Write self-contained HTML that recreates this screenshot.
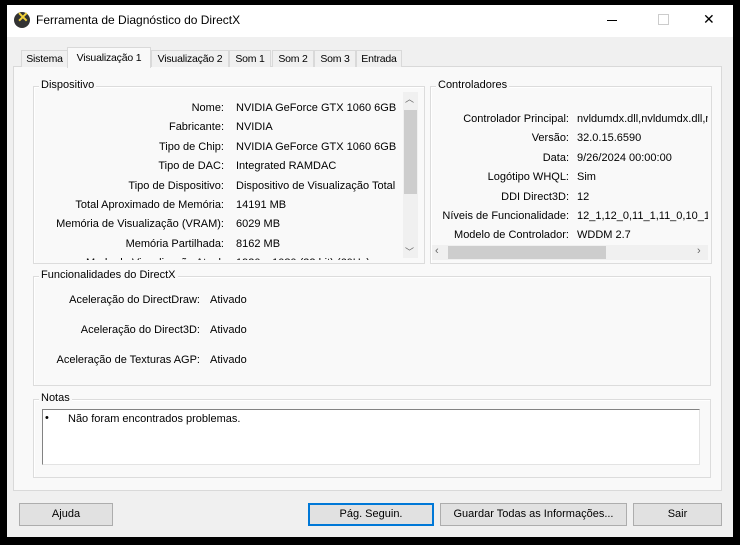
<!DOCTYPE html><html><head><style>
body{margin:0;width:740px;height:545px;background:#000;position:relative;overflow:hidden;font-family:"Liberation Sans",sans-serif;font-size:11px;color:#000}
.a{position:absolute}
.win{left:7px;top:5px;width:726px;height:532px;background:#f0f0f0}
.grp{position:absolute;border:1px solid #dcdcdc;box-shadow:inset 1px 1px 0 #fff}
.lbl{position:absolute;background:#f0f0f0;padding:0 2px}
.r{position:absolute;text-align:right}
.btn{position:absolute;height:21px;background:#e1e1e1;border:1px solid #adadad;text-align:center;line-height:21px;font-size:11px}
.tab{position:absolute;top:50px;height:16px;border:1px solid #d9d9d9;border-bottom:none;background:#f0f0f0;line-height:16px;text-align:center;font-size:10.5px;letter-spacing:-0.2px;white-space:nowrap;overflow:hidden}
</style></head><body>
<div class="a win"></div>
<div class="a" style="left:7px;top:5px;width:726px;height:32px;background:#fff"></div>
<div class="a" style="left:14px;top:12px;width:16px;height:16px;border-radius:50%;background:#333"></div>
<div class="a" style="left:17px;top:9px;color:#f2d23a;font-weight:bold;font-size:14px">✕</div>
<div class="a" style="left:36px;top:13px;font-size:12px">Ferramenta de Diagnóstico do DirectX</div>
<div class="a" style="left:607px;top:20px;width:10px;height:1px;background:#000"></div>
<div class="a" style="left:658px;top:14px;width:9px;height:9px;border:1px solid #ccc"></div>
<div class="a" style="left:703px;top:11px;font-size:14px">✕</div>
<div class="a" style="left:13px;top:66px;width:707px;height:423px;border:1px solid #d9d9d9;background:#f9f9f9"></div>
<div class="tab" style="left:21px;width:45px">Sistema</div>
<div class="tab" style="left:67px;top:47px;height:20px;width:82px;background:#f9f9f9;line-height:20px">Visualização 1</div>
<div class="tab" style="left:151px;width:76px">Visualização 2</div>
<div class="tab" style="left:229px;width:40px">Som 1</div>
<div class="tab" style="left:272px;width:40px">Som 2</div>
<div class="tab" style="left:314px;width:40px">Som 3</div>
<div class="tab" style="left:356px;width:44px">Entrada</div>
<div class="grp" style="left:33px;top:86px;width:390px;height:176px"></div>
<div class="lbl" style="left:39px;top:79px;background:#f9f9f9">Dispositivo</div>
<div class="a" style="left:403px;top:92px;width:15px;height:166px;background:#f0f0f0"></div>
<div class="a" style="left:404px;top:110px;width:13px;height:84px;background:#cdcdcd"></div>
<div class="a" style="left:405px;top:92px;font-size:9px;color:#666">︿</div>
<div class="a" style="left:405px;top:245px;font-size:9px;color:#666">﹀</div>
<div class="a" style="left:36px;top:93px;width:360px;height:167px;overflow:hidden">
<div class="r" style="right:172px;top:6px;line-height:19.4px;white-space:nowrap">Nome:<br>Fabricante:<br>Tipo de Chip:<br>Tipo de DAC:<br>Tipo de Dispositivo:<br>Total Aproximado de Memória:<br>Memória de Visualização (VRAM):<br>Memória Partilhada:<br>Modo de Visualização Atual:</div>
<div class="a" style="left:200px;top:6px;line-height:19.4px;white-space:nowrap">NVIDIA GeForce GTX 1060 6GB<br>NVIDIA<br>NVIDIA GeForce GTX 1060 6GB<br>Integrated RAMDAC<br>Dispositivo de Visualização Total<br>14191 MB<br>6029 MB<br>8162 MB<br>1920 x 1080 (32 bit) (60Hz)</div>
</div>
<div class="grp" style="left:430px;top:86px;width:280px;height:176px"></div>
<div class="lbl" style="left:436px;top:79px;background:#f9f9f9">Controladores</div>
<div class="a" style="left:432px;top:95px;width:276px;height:150px;overflow:hidden">
<div class="r" style="right:139px;top:15px;line-height:19.4px;white-space:nowrap">Controlador Principal:<br>Versão:<br>Data:<br>Logótipo WHQL:<br>DDI Direct3D:<br>Níveis de Funcionalidade:<br>Modelo de Controlador:</div>
<div class="a" style="left:145px;top:15px;line-height:19.4px;white-space:nowrap">nvldumdx.dll,nvldumdx.dll,nvldumdx.dll<br>32.0.15.6590<br>9/26/2024 00:00:00<br>Sim<br>12<br>12_1,12_0,11_1,11_0,10_1<br>WDDM 2.7</div>
</div>
<div class="a" style="left:432px;top:245px;width:276px;height:15px;background:#f0f0f0"></div>
<div class="a" style="left:448px;top:246px;width:158px;height:13px;background:#cdcdcd"></div>
<div class="a" style="left:435px;top:245px;color:#666">‹</div><div class="a" style="left:697px;top:245px;color:#666">›</div>
<div class="grp" style="left:33px;top:276px;width:676px;height:108px"></div>
<div class="lbl" style="left:39px;top:269px;background:#f9f9f9">Funcionalidades do DirectX</div>
<div class="r" style="right:540px;top:285px;line-height:30px;white-space:nowrap">Aceleração do DirectDraw:<br>Aceleração do Direct3D:<br>Aceleração de Texturas AGP:</div>
<div class="a" style="left:210px;top:285px;line-height:30px">Ativado<br>Ativado<br>Ativado</div>
<div class="grp" style="left:33px;top:399px;width:676px;height:77px"></div>
<div class="lbl" style="left:39px;top:392px;background:#f9f9f9">Notas</div>
<div class="a" style="left:42px;top:409px;width:656px;height:54px;background:#fff;border:1px solid #828282;border-right-color:#e3e3e3;border-bottom-color:#e3e3e3"></div>
<div class="a" style="left:45px;top:412px">•</div>
<div class="a" style="left:68px;top:413px">Não foram encontrados problemas.</div>
<div class="btn" style="left:19px;top:503px;width:92px">Ajuda</div>
<div class="btn" style="left:308px;top:503px;width:124px;border:1px solid #0078d7;box-shadow:inset 0 0 0 1px #0078d7">Pág. Seguin.</div>
<div class="btn" style="left:440px;top:503px;width:185px">Guardar Todas as Informações...</div>
<div class="btn" style="left:633px;top:503px;width:87px">Sair</div>
</body></html>
